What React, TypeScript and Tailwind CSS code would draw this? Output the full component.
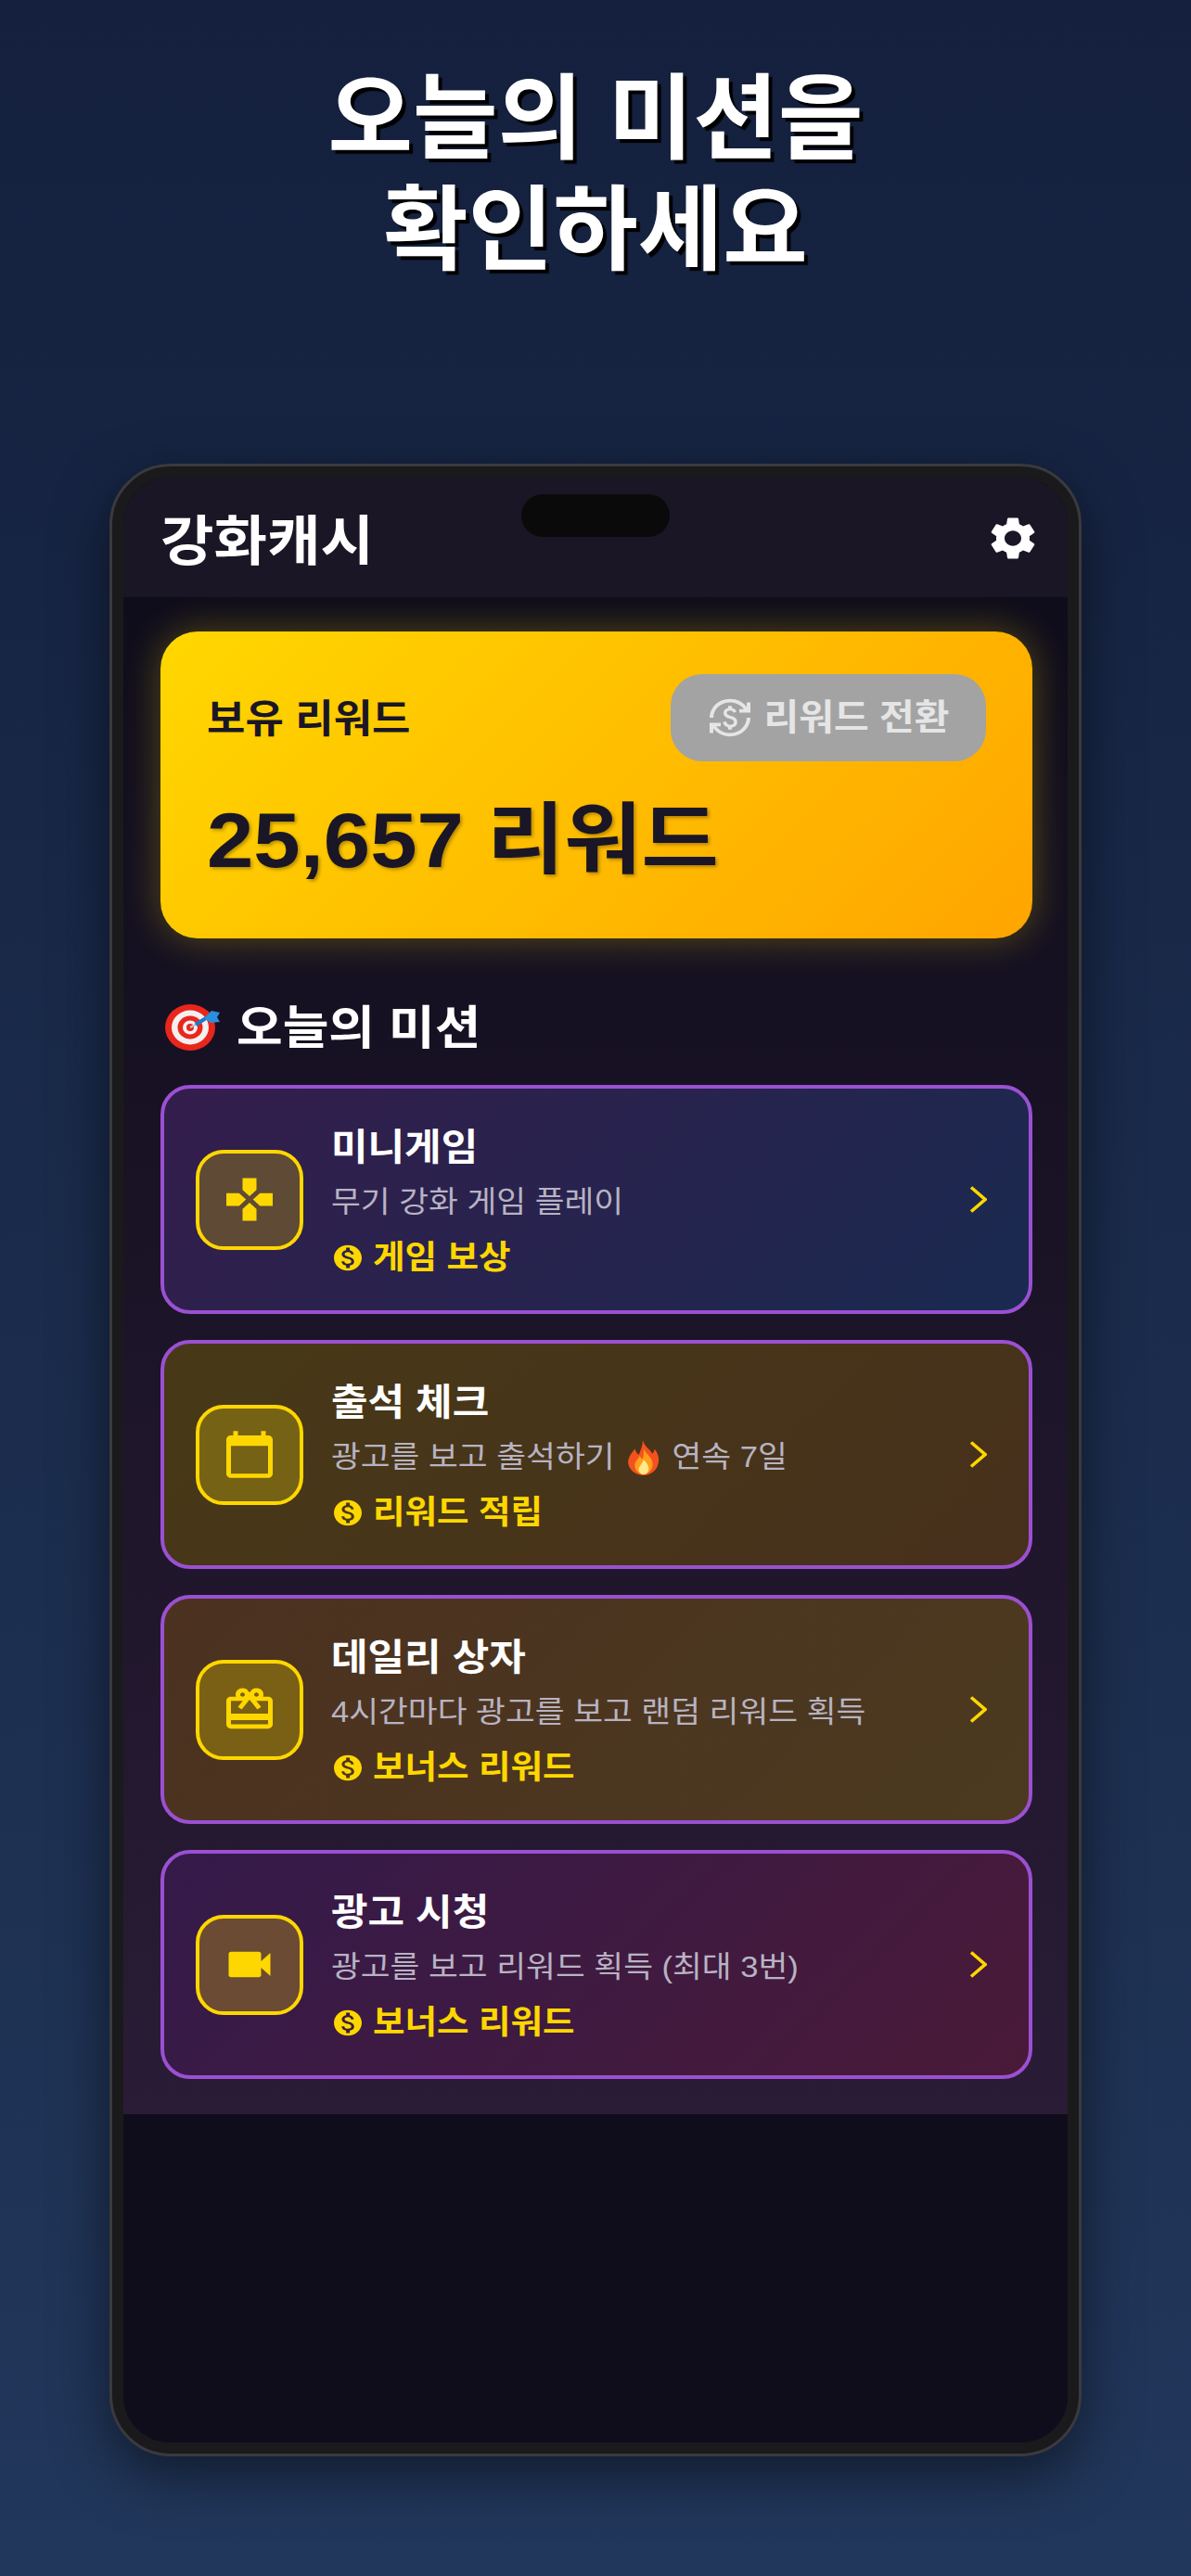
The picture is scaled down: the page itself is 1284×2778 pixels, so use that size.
import React from "react";
import {
  MdGames,
  MdCalendarToday,
  MdRedeem,
  MdVideocam,
  MdSettings,
  MdMonetizationOn,
  MdCurrencyExchange,
} from "react-icons/md";

function Squeezed({ className = "", children }: { className?: string; children: React.ReactNode }) {
  return <span className={"inline-block origin-center scale-y-[0.93] whitespace-nowrap " + className}>{children}</span>;
}

function TargetEmoji() {
  return (
    <svg viewBox="0 0 60 52" className="w-[60px] h-[52px] shrink-0">
      <ellipse cx="27" cy="27" rx="27" ry="25" fill="#e8261c" />
      <ellipse cx="27" cy="27" rx="20" ry="18.5" fill="#f6efef" />
      <ellipse cx="27" cy="27" rx="13.5" ry="12.5" fill="#e8261c" />
      <ellipse cx="27" cy="27" rx="8" ry="7.5" fill="#f6efef" />
      <ellipse cx="27" cy="27" rx="4" ry="4" fill="#e8261c" />
      <path d="M27 27 L42 19" stroke="#b9c4cc" strokeWidth="2" />
      <path d="M33 24 L44 17" stroke="#1f78c8" strokeWidth="4" />
      <path d="M42 17 L50 9 L59 11 L56 16 L59 21 L49 22 Z" fill="#2a8fdc" />
    </svg>
  );
}

function FlameEmoji() {
  return (
    <svg viewBox="0 0 32 36" className="w-[36px] h-[38px] shrink-0 mx-[13px] self-center">
      <path d="M15 0 C17 7 22 9 25 14 C27 11 27 10 27 9 C31 14 32 19 31 23 C30 31 23 36 16 36 C8 36 1 31 0 23 C0 17 4 13 7 9 C8 12 9 14 11 15 C13 10 15 6 15 0 Z" fill="#f4511e" />
      <path d="M16 9 C18 14 24 17 25 23 C26 30 21 35 16 35 C10 35 6 30 7 24 C8 20 11 19 12 16 C13 18 14 19 15 19 C16 16 16 12 16 9 Z" fill="#ff9d1c" />
      <path d="M16 20 C18 23 21 25 21 29 C21 33 19 35 16 35 C13 35 11 33 11 30 C11 27 14 25 16 20 Z" fill="#ffe98a" />
    </svg>
  );
}

type Mission = {
  title: string;
  desc: React.ReactNode;
  reward: string;
  card: string;
  box: string;
  icon: React.ReactNode;
};

const iconClass = "w-[60px] h-[55px] text-[#ffd700]";

const missions: Mission[] = [
  {
    title: "미니게임",
    desc: <Squeezed>무기 강화 게임 플레이</Squeezed>,
    reward: "게임 보상",
    card: "bg-linear-[135deg] from-[#341d4c] to-[#1a2a50]",
    box: "bg-[#5f4a35]",
    icon: <MdGames className={iconClass} preserveAspectRatio="none" />,
  },
  {
    title: "출석 체크",
    desc: (
      <>
        <Squeezed>광고를 보고 출석하기</Squeezed>
        <FlameEmoji />
        <Squeezed>연속 7일</Squeezed>
      </>
    ),
    reward: "리워드 적립",
    card: "bg-linear-[135deg] from-[#473917] to-[#47301c]",
    box: "bg-[#766214]",
    icon: <MdCalendarToday className={iconClass} preserveAspectRatio="none" />,
  },
  {
    title: "데일리 상자",
    desc: <Squeezed>4시간마다 광고를 보고 랜덤 리워드 획득</Squeezed>,
    reward: "보너스 리워드",
    card: "bg-linear-[135deg] from-[#4c3120] to-[#4b3a1f]",
    box: "bg-[#7a6014]",
    icon: <MdRedeem className={iconClass} preserveAspectRatio="none" />,
  },
  {
    title: "광고 시청",
    desc: <Squeezed>광고를 보고 리워드 획득 (최대 3번)</Squeezed>,
    reward: "보너스 리워드",
    card: "bg-linear-[135deg] from-[#341a4a] to-[#4a1a38]",
    box: "bg-[#6b4b33]",
    icon: <MdVideocam className={iconClass} preserveAspectRatio="none" />,
  },
];

function MissionCard({ m }: { m: Mission }) {
  return (
    <div className={"flex items-center h-[247px] rounded-[32px] border-[4px] border-[#9b50d2] pl-[34px] pr-[45px] " + m.card}>
      <div className={"flex items-center justify-center w-[116px] h-[108px] shrink-0 rounded-[30px] border-[4px] border-[#ffd700] " + m.box}>
        {m.icon}
      </div>
      <div className="flex-1 flex flex-col ml-[30px] pt-[8px]">
        <div className="h-[58px] flex items-center text-[43px] font-bold text-white">
          <Squeezed>{m.title}</Squeezed>
        </div>
        <div className="h-[60px] flex items-center text-[34.6px] text-[#b8b3c2]">{m.desc}</div>
        <div className="h-[60px] flex items-center text-[#ffd700]">
          <MdMonetizationOn className="w-[36px] h-[33px] mr-[9px] shrink-0" preserveAspectRatio="none" />
          <Squeezed className="text-[37.5px] font-bold">{m.reward}</Squeezed>
        </div>
      </div>
      <svg viewBox="0 0 19 29" className="w-[19px] h-[29px] shrink-0" fill="none" stroke="#ffd700" strokeWidth="3.6">
        <path d="M2 1.5 L17 14.5 L2 27.5" />
      </svg>
    </div>
  );
}

export default function App() {
  return (
    <div className="h-[2778px] w-[1284px] overflow-hidden bg-linear-to-b from-[#14203d] to-[#21375b] font-['Liberation_Sans','Noto_Sans_CJK_KR',sans-serif]">
      <h1 className="pt-[69px] text-center text-[99.5px] leading-[120px] font-bold text-white [text-shadow:4px_4px_1px_#000]">
        오늘의 미션을
        <br />
        확인하세요
      </h1>
      <div className="relative mt-[191px] ml-[118px] w-[1048px] h-[2149px] rounded-[66px] border-[3px] border-[#3a3a3e] bg-[#1a1a1c] p-[12px] shadow-[0_20px_60px_rgba(0,0,0,0.5)]">
        <div className="absolute top-[30px] left-[441px] w-[160px] h-[46px] rounded-[23px] bg-[#0a0a0a] z-10" />
        <div className="h-full rounded-[50px] overflow-hidden bg-[#0f0d1b] flex flex-col">
          <header className="h-[129px] shrink-0 flex items-center justify-between bg-[#1a1625] pl-[40px] pr-[29px] pt-[8px]">
            <Squeezed className="text-[62.5px] font-bold text-white">강화캐시</Squeezed>
            <MdSettings className="w-[60px] h-[55px] text-white -mt-[6px]" preserveAspectRatio="none" />
          </header>
          <main className="pl-[40px] pr-[38px] pt-[37px] pb-[38px] bg-linear-to-b from-[#0f0d1b] to-[#2a1c36]">
            <section className="h-[331px] rounded-[40px] bg-linear-[135deg] from-[#ffd700] to-[#ffa500] px-[50px] pt-[46px] shadow-[0_0_40px_rgba(255,215,0,0.3)]">
              <div className="flex items-center justify-between h-[94px]">
                <Squeezed className="text-[45px] font-semibold text-[#1a1625] translate-y-[2px]">보유 리워드</Squeezed>
                <div className="flex items-center justify-center w-[340px] h-[94px] rounded-[34px] bg-[#a3a3a3] text-[#e5e5e5]">
                  <MdCurrencyExchange className="w-[48px] h-[44px] mr-[13px]" preserveAspectRatio="none" />
                  <Squeezed className="text-[41px] font-bold translate-y-[1px]">리워드 전환</Squeezed>
                </div>
              </div>
              <div className="mt-[30px]">
                <Squeezed className="text-[90.5px] leading-[110px] font-bold text-[#1a1625] [text-shadow:2px_2px_4px_rgba(0,0,0,0.3)]">
                  25,657 리워드
                </Squeezed>
              </div>
            </section>
            <div className="mt-[64px] mb-[30px] h-[64px] flex items-center">
              <div className="ml-[5px] mr-[17px] -mt-[2px]">
                <TargetEmoji />
              </div>
              <Squeezed className="text-[54px] font-bold text-white">오늘의 미션</Squeezed>
            </div>
            <div className="flex flex-col gap-[28px]">
              {missions.map((m) => (
                <MissionCard key={m.title} m={m} />
              ))}
            </div>
          </main>
        </div>
      </div>
    </div>
  );
}
